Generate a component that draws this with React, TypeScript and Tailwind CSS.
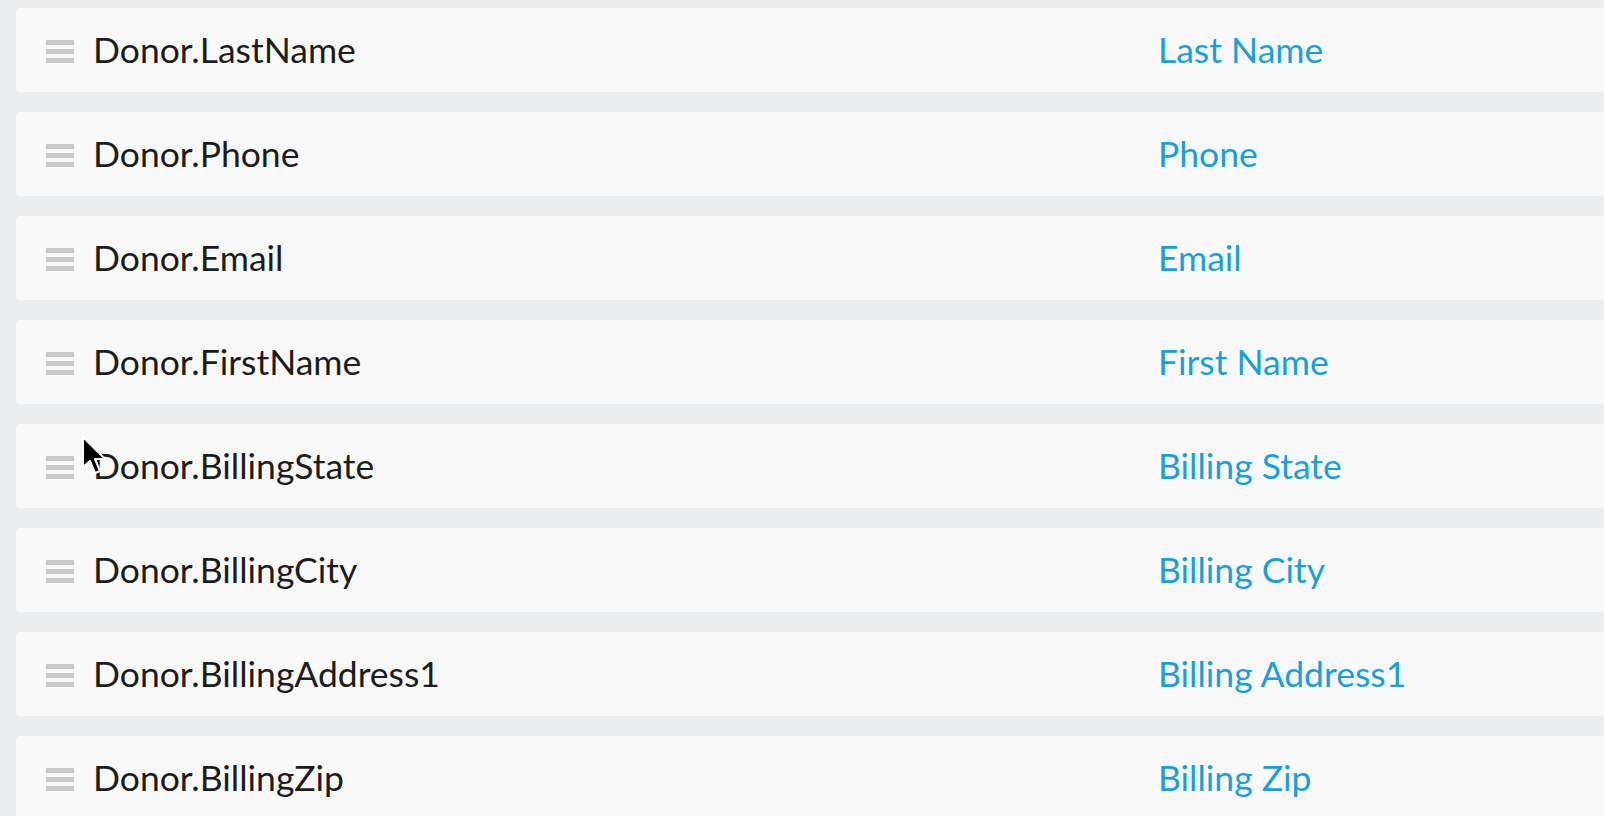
import React from "react";

const rows = [
  { field: "Donor.LastName", label: "Last Name" },
  { field: "Donor.Phone", label: "Phone" },
  { field: "Donor.Email", label: "Email" },
  { field: "Donor.FirstName", label: "First Name" },
  { field: "Donor.BillingState", label: "Billing State" },
  { field: "Donor.BillingCity", label: "Billing City" },
  { field: "Donor.BillingAddress1", label: "Billing Address1" },
  { field: "Donor.BillingZip", label: "Billing Zip" },
];

function DragHandle() {
  return (
    <div className="flex flex-col gap-[4px] w-[28px] shrink-0 mt-[3px]">
      <span className="block h-[5px] bg-[#c8c8c8]" />
      <span className="block h-[5px] bg-[#c8c8c8]" />
      <span className="block h-[5px] bg-[#c8c8c8]" />
    </div>
  );
}

export default function App() {
  return (
    <div
      className="relative w-full h-[816px] overflow-hidden bg-[#ebeced] pt-[8px] pl-[16px]"
      style={{ fontFamily: "Lato, 'Liberation Sans', sans-serif" }}
    >
      <div className="flex flex-col gap-[20px]">
        {rows.map((row) => (
          <div
            key={row.field}
            className="flex items-center h-[84px] bg-[#f8f8f8] rounded-l-[4px] pl-[30px]"
          >
            <DragHandle />
            <span className="ml-[19px] w-[1065px] shrink-0 text-[35.5px] leading-none text-[#1c1c1c] -mt-[1px]">
              {row.field}
            </span>
            <span className="text-[35.5px] leading-none text-[#1a9fd9] -mt-[1px]">
              {row.label}
            </span>
          </div>
        ))}
      </div>

      {/* mouse cursor */}
      <svg
        className="absolute left-[81px] top-[435px]"
        width="28"
        height="42"
        viewBox="0 0 28 42"
      >
        <path
          d="M2 2 L2 32 L9 26 L14 38 L19 36 L14 24 L24 24 Z"
          fill="#000"
          stroke="#fff"
          strokeWidth="2"
          strokeLinejoin="round"
        />
      </svg>
    </div>
  );
}
